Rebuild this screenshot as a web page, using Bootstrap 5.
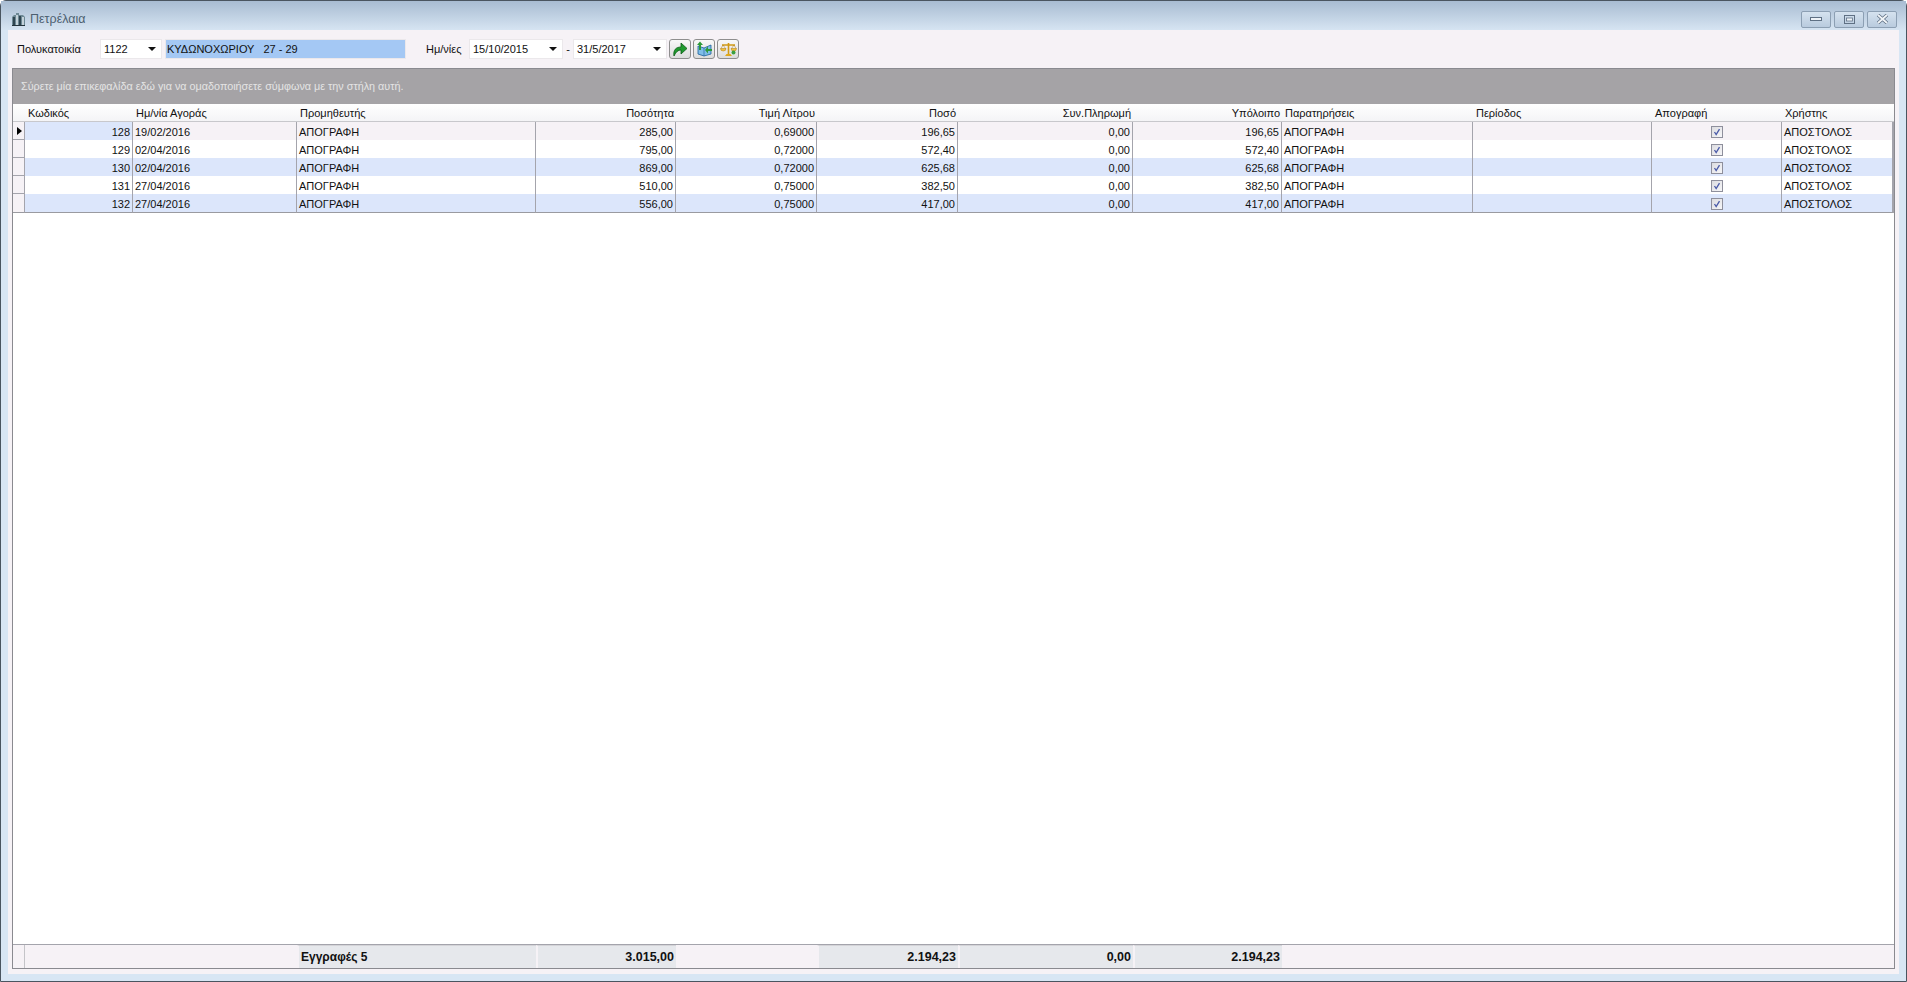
<!DOCTYPE html>
<html lang="el">
<head>
<meta charset="UTF-8">
<title>Πετρέλαια</title>
<link href="https://cdn.jsdelivr.net/npm/bootstrap@5.3.3/dist/css/bootstrap.min.css" rel="stylesheet">
<style>
  html, body { height: 100%; overflow: hidden; }
  body { background: #fff; font-family: "Liberation Sans", Arial, sans-serif; font-size: 11px; color: #111; }
  .win-frame { height: 982px; border: 1px solid #4a5560; border-radius: 6px 6px 0 0; background: #d8e6f4; padding: 0 7px 7px; }
  .win-title { height: 29px; margin: 0 -7px; padding: 7px 7px 0 10px; background: linear-gradient(#a8bcd2, #d6e4f2); color: #4d5f70; font-size: 12.5px; }
  .win-btn { width: 30px; height: 17px; border: 1px solid #8c9fb3; border-radius: 2px; background: linear-gradient(#d5e2ef, #b9cbde); }
  .win-btns { gap: 3px; margin-right: 2px; }
  .win-body { background: #f6f2f6; padding: 0 4px 5px 4px; min-height: 0; }
  .tool-row { height: 38px; padding-left: 5px; }
  .tool-label { width: 83px; }
  .combo { height: 20px; background: #fff; border: 1px solid #ebe8eb; padding-left: 3px; font-size: 11px; }
  .combo-code { width: 62px; }
  .combo-date { width: 94px; }
  .combo-arrow { width: 0; height: 0; border: 4px solid transparent; border-top: 4px solid #111; border-bottom: 0; margin-right: 5px; }
  .name-field { width: 239px; height: 18px; margin-left: 4px; background: #a4c8f4; padding-left: 1px; font-size: 11px; box-shadow: 0 0 0 1px #ebe8eb; }
  .date-label { margin-left: 21px; width: 43px; }
  .dash { width: 10px; text-align: center; }
  .tool-btn { width: 22px; height: 20px; margin-left: 2px; border: 1px solid #8e8e8e; border-radius: 3px; background: linear-gradient(#f8f8f8, #dcdcdc); padding: 0; }
  .grid-box { border: 1px solid #8a8a90; min-height: 0; background: #fff; }
  .group-panel { height: 35px; background: #a5a3a6; color: #e4e4e4; padding-left: 8px; font-size: 10.8px; }
  .data-table { table-layout: fixed; width: 1881px; border-collapse: separate; border-spacing: 0; }
  .data-table th, .data-table td { height: 18px; padding: 1px 2px 0; font-weight: 400; white-space: nowrap; overflow: hidden; line-height: 16px; }
  .data-table th { background: linear-gradient(#fff, #f4f4f6); border-bottom: 1px solid #c8c8cc; padding-left: 3px; }
  .data-table td { border-right: 1px solid #a4a4ac; }
  .data-table td:last-child { border-right: 2px solid #a4a4ac; }
  .data-table tbody tr:last-child td { border-bottom: 1px solid #9a9aa0; height: 19px; }
  .data-table .row-ind { background: #f6f2f6; border-bottom: 1px solid #a4a4ac; padding: 0; }
  .row-blue td:not(.row-ind) { background: #dce6fb; }
  .row-focus td:not(.row-ind) { background: #f6f2f6; }
  .row-focus td.code-cell { background: #dce6fb; }
  .ind-arrow { display: block; width: 0; height: 0; margin-left: 4px; border: 4px solid transparent; border-left: 5px solid #000; border-right: 0; }
  .check-box { display: block; width: 12px; height: 12px; margin: 0 auto; border: 1px solid #8e8f9c; background: linear-gradient(135deg, #dcdce0, #f6f6f8); }
  .foot-table { table-layout: fixed; width: 1881px; border-collapse: separate; border-spacing: 0; background: #f6f2f6; }
  .foot-table td { height: 23px; padding: 0 2px; font-weight: 700; white-space: nowrap; font-size: 12px; }
  .foot-table td.foot-num { font-size: 12.5px; }
  .foot-wrap { border-top: 1px solid #a4a4ac; background: #f6f2f6; }
  .foot-ind { border-right: 1px solid #c4c4c8; }
  .foot-sum { background: #e6e8ec; border-left: 2px solid #f6f2f6; border-top: 1px solid #d4d4d8; }
</style>
</head>
<body>
<div class="win-frame d-flex flex-column">
  <div class="win-title d-flex align-items-center flex-shrink-0">
    <svg width="15" height="14" viewBox="0 0 15 14" class="me-1"><path d="M1 5 L3 3 H5 V1 H8 V3 H12 L14 5 V13 H1 Z" fill="#6d8894"/><rect x="2" y="5" width="2" height="8" fill="#2f4550"/><rect x="5" y="3" width="2" height="10" fill="#c4d2da"/><rect x="8" y="4" width="2" height="9" fill="#2f4550"/><rect x="11" y="5" width="2" height="8" fill="#c4d2da"/><rect x="1" y="13" width="13" height="1" fill="#24343c"/></svg>
    <span>Πετρέλαια</span>
    <div class="win-btns d-flex ms-auto">
      <div class="win-btn d-flex align-items-center justify-content-center"><svg width="12" height="6" viewBox="0 0 12 6"><rect x="0.5" y="1.5" width="11" height="3" fill="#eef3f8" stroke="#5f7084"/></svg></div>
      <div class="win-btn d-flex align-items-center justify-content-center"><svg width="11" height="9" viewBox="0 0 11 9"><rect x="0.5" y="0.5" width="10" height="8" fill="none" stroke="#5f7084"/><rect x="2.5" y="3" width="6" height="3" fill="#eef3f8" stroke="#5f7084" stroke-width="0.8"/></svg></div>
      <div class="win-btn d-flex align-items-center justify-content-center"><svg width="13" height="10" viewBox="0 0 13 10"><path d="M2 1 L11 9 M11 1 L2 9" stroke="#5f7084" stroke-width="3.4"/><path d="M2 1 L11 9 M11 1 L2 9" stroke="#f2f5f8" stroke-width="1.8"/></svg></div>
    </div>
  </div>
  <div class="win-body d-flex flex-column flex-grow-1">
    <div class="tool-row d-flex align-items-center flex-shrink-0">
      <span class="tool-label">Πολυκατοικία</span>
      <div class="combo combo-code d-flex align-items-center justify-content-between"><span>1122</span><i class="combo-arrow"></i></div>
      <div class="name-field d-flex align-items-center">ΚΥΔΩΝΟΧΩΡΙΟΥ &nbsp; 27 - 29</div>
      <span class="date-label">Ημ/νίες</span>
      <div class="combo combo-date d-flex align-items-center justify-content-between"><span>15/10/2015</span><i class="combo-arrow"></i></div>
      <span class="dash">-</span>
      <div class="combo combo-date d-flex align-items-center justify-content-between"><span>31/5/2017</span><i class="combo-arrow"></i></div>
      <button class="tool-btn d-flex align-items-center justify-content-center" type="button" aria-label="Εκτέλεση"><svg width="16" height="15" viewBox="0 0 16 15"><path d="M2 14 C1 8 4 5 9 5 V1 L15 6.5 L9 12 V8 C6 8 4 10 2 14 Z" fill="#1f9a2e" stroke="#0c5c16" stroke-width="0.8"/></svg></button>
      <button class="tool-btn d-flex align-items-center justify-content-center" type="button" aria-label="Χάρτης"><svg width="17" height="16" viewBox="0 0 17 16"><path d="M2 5 L8 7 L15 4 V13 L8 15 L2 13 Z" fill="#7fbde8" stroke="#1c5f9a" stroke-width="0.8"/><path d="M8 7 V15" stroke="#1c5f9a" stroke-width="0.6"/><path d="M3 9 V4 H1 L4 0.5 L7 4 H5 V9 Z" fill="#2d9a3a"/><path d="M9 9 L12 5.5 V8 H16 V10 H12 V12.5 Z" fill="#2d9a3a"/></svg></button>
      <button class="tool-btn d-flex align-items-center justify-content-center" type="button" aria-label="Ζυγός"><svg width="17" height="15" viewBox="0 0 17 15"><path d="M8.5 1 V12 M2 3 H15" stroke="#d19a14" stroke-width="1.6"/><path d="M5 14 H12 L10.5 12 H6.5 Z" fill="#e0a818"/><path d="M0.5 6.5 H6 A2.75 2.5 0 0 1 0.5 6.5 Z" fill="#f2c23a" stroke="#b07c0c" stroke-width="0.5"/><path d="M11 6.5 H16.5 A2.75 2.5 0 0 1 11 6.5 Z" fill="#f2c23a" stroke="#b07c0c" stroke-width="0.5"/><path d="M3 3 L1 6.5 M3 3 L5.5 6.5 M14 3 L11.5 6.5 M14 3 L16 6.5" stroke="#b07c0c" stroke-width="0.5"/><circle cx="13.5" cy="10.5" r="2" fill="#3aa040"/></svg></button>
    </div>
    <div class="grid-box d-flex flex-column flex-grow-1">
      <div class="group-panel d-flex align-items-center flex-shrink-0">Σύρετε μία επικεφαλίδα εδώ για να ομαδοποιήσετε σύμφωνα με την στήλη αυτή.</div>
      <div class="flex-grow-1">
        <table class="data-table">
          <colgroup><col style="width:12px"><col style="width:108px"><col style="width:164px"><col style="width:239px"><col style="width:140px"><col style="width:141px"><col style="width:141px"><col style="width:175px"><col style="width:149px"><col style="width:191px"><col style="width:179px"><col style="width:130px"><col style="width:112px"></colgroup>
          <thead>
            <tr><th></th><th>Κωδικός</th><th>Ημ/νία Αγοράς</th><th>Προμηθευτής</th><th class="text-end">Ποσότητα</th><th class="text-end">Τιμή Λίτρου</th><th class="text-end">Ποσό</th><th class="text-end">Συν.Πληρωμή</th><th class="text-end">Υπόλοιπο</th><th>Παρατηρήσεις</th><th>Περίοδος</th><th>Απογραφή</th><th>Χρήστης</th></tr>
          </thead>
          <tbody>
            <tr class="row-focus"><td class="row-ind"><i class="ind-arrow"></i></td><td class="code-cell text-end">128</td><td>19/02/2016</td><td>ΑΠΟΓΡΑΦΗ</td><td class="text-end">285,00</td><td class="text-end">0,69000</td><td class="text-end">196,65</td><td class="text-end">0,00</td><td class="text-end">196,65</td><td>ΑΠΟΓΡΑΦΗ</td><td></td><td><svg class="check-box" viewBox="0 0 12 12"><path d="M3 6 L5 9 L9 2.5" fill="none" stroke="#4a5aa8" stroke-width="1.6"/></svg></td><td>ΑΠΟΣΤΟΛΟΣ</td></tr>
            <tr><td class="row-ind"></td><td class="text-end">129</td><td>02/04/2016</td><td>ΑΠΟΓΡΑΦΗ</td><td class="text-end">795,00</td><td class="text-end">0,72000</td><td class="text-end">572,40</td><td class="text-end">0,00</td><td class="text-end">572,40</td><td>ΑΠΟΓΡΑΦΗ</td><td></td><td><svg class="check-box" viewBox="0 0 12 12"><path d="M3 6 L5 9 L9 2.5" fill="none" stroke="#4a5aa8" stroke-width="1.6"/></svg></td><td>ΑΠΟΣΤΟΛΟΣ</td></tr>
            <tr class="row-blue"><td class="row-ind"></td><td class="text-end">130</td><td>02/04/2016</td><td>ΑΠΟΓΡΑΦΗ</td><td class="text-end">869,00</td><td class="text-end">0,72000</td><td class="text-end">625,68</td><td class="text-end">0,00</td><td class="text-end">625,68</td><td>ΑΠΟΓΡΑΦΗ</td><td></td><td><svg class="check-box" viewBox="0 0 12 12"><path d="M3 6 L5 9 L9 2.5" fill="none" stroke="#4a5aa8" stroke-width="1.6"/></svg></td><td>ΑΠΟΣΤΟΛΟΣ</td></tr>
            <tr><td class="row-ind"></td><td class="text-end">131</td><td>27/04/2016</td><td>ΑΠΟΓΡΑΦΗ</td><td class="text-end">510,00</td><td class="text-end">0,75000</td><td class="text-end">382,50</td><td class="text-end">0,00</td><td class="text-end">382,50</td><td>ΑΠΟΓΡΑΦΗ</td><td></td><td><svg class="check-box" viewBox="0 0 12 12"><path d="M3 6 L5 9 L9 2.5" fill="none" stroke="#4a5aa8" stroke-width="1.6"/></svg></td><td>ΑΠΟΣΤΟΛΟΣ</td></tr>
            <tr class="row-blue"><td class="row-ind"></td><td class="text-end">132</td><td>27/04/2016</td><td>ΑΠΟΓΡΑΦΗ</td><td class="text-end">556,00</td><td class="text-end">0,75000</td><td class="text-end">417,00</td><td class="text-end">0,00</td><td class="text-end">417,00</td><td>ΑΠΟΓΡΑΦΗ</td><td></td><td><svg class="check-box" viewBox="0 0 12 12"><path d="M3 6 L5 9 L9 2.5" fill="none" stroke="#4a5aa8" stroke-width="1.6"/></svg></td><td>ΑΠΟΣΤΟΛΟΣ</td></tr>
          </tbody>
        </table>
      </div>
      <div class="foot-wrap flex-shrink-0">
        <table class="foot-table">
          <colgroup><col style="width:12px"><col style="width:108px"><col style="width:164px"><col style="width:239px"><col style="width:140px"><col style="width:141px"><col style="width:141px"><col style="width:175px"><col style="width:149px"><col style="width:191px"><col style="width:179px"><col style="width:130px"><col style="width:112px"></colgroup>
          <tr><td class="foot-ind"></td><td></td><td></td><td class="foot-sum">Εγγραφές 5</td><td class="foot-sum foot-num text-end">3.015,00</td><td></td><td class="foot-sum foot-num text-end">2.194,23</td><td class="foot-sum foot-num text-end">0,00</td><td class="foot-sum foot-num text-end">2.194,23</td><td></td><td></td><td></td><td></td></tr>
        </table>
      </div>
    </div>
  </div>
</div>
<script src="https://cdn.jsdelivr.net/npm/bootstrap@5.3.3/dist/js/bootstrap.bundle.min.js"></script>
</body>
</html>
